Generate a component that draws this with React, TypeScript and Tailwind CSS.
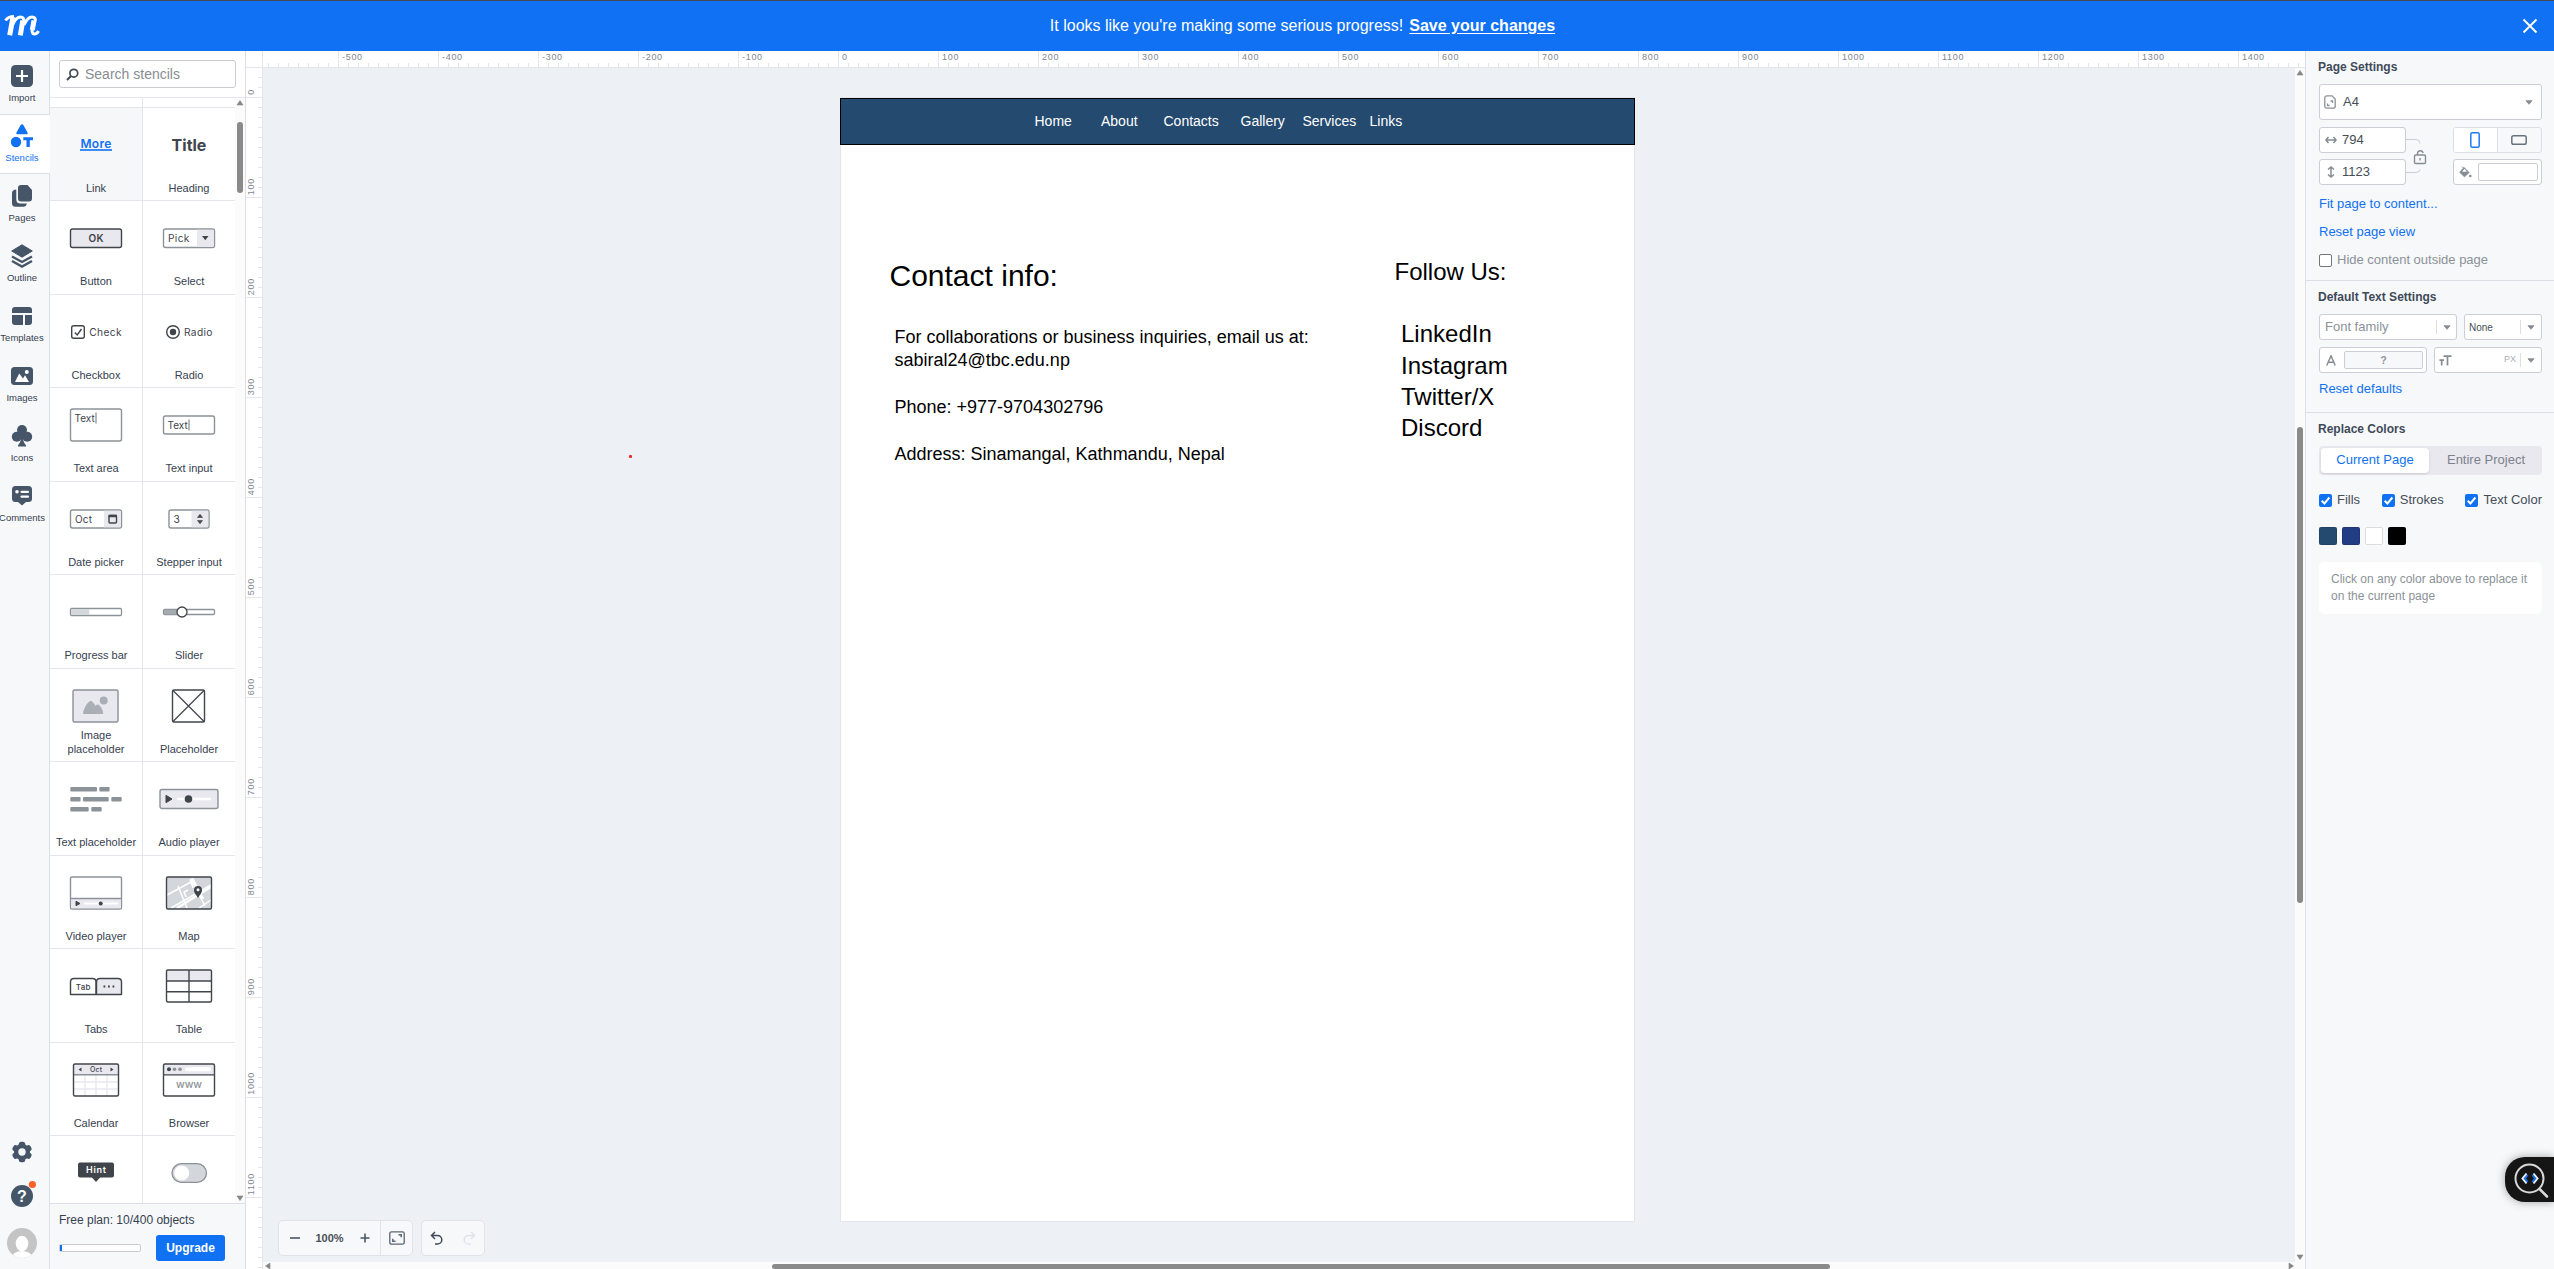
import React from "react";

const DARK = "#40444b";
const GRAY = "#8b9298";
const LIGHT = "#e9e8ef";
const SLATE = "#465668";

/* ---------- left rail ---------- */

const railIcons: Record<string, React.ReactNode> = {
  Import: (
    <>
      <rect x="1" y="1" width="22" height="22" rx="4.5" fill={SLATE} />
      <path d="M12 6v12M6 12h12" stroke="#fff" strokeWidth="2.2" />
    </>
  ),
  Stencils: (
    <g fill="#1071f2">
      <path d="M12 0.3c.6 0 1 .3 1.3.8l4.2 7.3c.5 1-.1 1.9-1.100 1.900H7.600c-1.100 0-1.600-.9-1.100-1.900L10.700 1.100c.3-.5.7-.8 1.300-.8z" />
      <circle cx="6" cy="18" r="5.200" />
      <path d="M13.300 13.200h9.700v3.100h-3.200V23h-3.300v-6.700h-3.200z" />
    </g>
  ),
  Pages: (
    <g fill={SLATE}>
      <path d="M11 1h6.500L22 6v8.500a3 3 0 0 1-3 3h-8a3 3 0 0 1-3-3V4a3 3 0 0 1 3-3z" />
      <path d="M6.300 5.500v10a4 4 0 0 0 4 4h6.500c-.3 2-1.500 3.300-3.300 3.300H5.500A3.500 3.500 0 0 1 2 19.300V9c0-2 1.800-3.500 4.300-3.500z" />
    </g>
  ),
  Outline: (
    <g>
      <path d="M12 .8 22.300 7 12 13.200 1.700 7z" fill={SLATE} stroke={SLATE} strokeLinejoin="round" />
      <path d="M2 12.500l10 5.500 10-5.500M2 17l10 5.600L22 17" fill="none" stroke={SLATE} strokeWidth="2.300" />
    </g>
  ),
  Templates: (
    <g fill={SLATE}>
      <path d="M5 3h14a3 3 0 0 1 3 3v3H2V6a3 3 0 0 1 3-3z" />
      <path d="M2 11h11v10H5a3 3 0 0 1-3-3zM15 11h7v7a3 3 0 0 1-3 3h-4z" />
    </g>
  ),
  Images: (
    <>
      <rect x="1" y="3" width="22" height="18" rx="3.500" fill={SLATE} />
      <path d="M5 18l4.200-8.500 3.800 5 2-3.200L19 18z" fill="#fff" />
      <circle cx="16.800" cy="8" r="2" fill="#fff" />
    </>
  ),
  Icons: (
    <g fill={SLATE}>
      <circle cx="12" cy="6" r="5" />
      <circle cx="6.800" cy="12.700" r="5" />
      <circle cx="17.200" cy="12.700" r="5" />
      <path d="M10 9h4l-1 5c.2 3.500 1.200 5 3 7.200V22.500H8v-1.300c1.800-2.200 2.800-3.700 3-7.200z" />
    </g>
  ),
  Comments: (
    <>
      <path d="M5.500 2h13A3.500 3.500 0 0 1 22 5.500v9a3.500 3.500 0 0 1-3.500 3.500H16l-4 3.500L8 18H5.500A3.500 3.500 0 0 1 2 14.500v-9A3.500 3.500 0 0 1 5.500 2z" fill={SLATE} />
      <circle cx="7" cy="7.800" r="1.800" fill="#fff" />
      <path d="M11.500 7.800h6.500M11.500 12.700h6.500" stroke="#fff" strokeWidth="2.200" strokeLinecap="round" />
    </>
  ),
};

function Rail() {
  return (
    <div className="flex w-[50px] shrink-0 flex-col border-r border-[#dcdfe6] bg-[#f7f8fa] pt-[3px]">
      {Object.keys(railIcons).map((name) => (
        <div
          key={name}
          className={
            name === "Stencils"
              ? "relative z-10 h-[60px] w-[50px] border-y border-[#dcdfe6] bg-white pt-[9px] text-[#1071f2]"
              : "h-[60px] w-[50px] pt-[10px] text-[#36414f]"
          }
        >
          <div className="flex w-[44px] flex-col items-center">
            <svg width="24" height="24" viewBox="0 0 24 24">
              {railIcons[name]}
            </svg>
            <span className="mt-1 text-[9.500px] leading-[12px] whitespace-nowrap">{name}</span>
          </div>
        </div>
      ))}
      <div className="mt-auto flex w-[44px] flex-col items-center pb-[11px]">
        <svg width="24" height="24" viewBox="0 0 24 24">
          <g fill={SLATE}>
            <circle cx="12" cy="12" r="8" />
            {[0, 60, 120, 180, 240, 300].map((a) => (
              <rect key={a} x="8.800" y="1.800" width="6.400" height="7" rx="2.500" transform={`rotate(${a} 12 12)`} />
            ))}
          </g>
          <circle cx="12" cy="12" r="3.700" fill="#f7f8fa" />
        </svg>
        <svg className="mt-[20px] overflow-visible" width="24" height="24" viewBox="0 0 24 24">
          <circle cx="12" cy="12" r="11" fill={SLATE} />
          <text x="12" y="17.500" textAnchor="middle" fontSize="16" fontWeight="700" fill="#fff">?</text>
          <circle cx="22.400" cy="0.500" r="3.600" fill="#fd6123" />
        </svg>
        <svg className="mt-[20px]" width="30" height="30" viewBox="0 0 30 30">
          <defs>
            <clipPath id="avatar"><circle cx="15" cy="15" r="15" /></clipPath>
          </defs>
          <g clipPath="url(#avatar)">
            <rect width="30" height="30" fill="#c4c4c4" />
            <ellipse cx="15" cy="15.500" rx="6.300" ry="7.800" fill="#fff" />
            <ellipse cx="15" cy="29" rx="10" ry="6" fill="#fff" />
          </g>
        </svg>
      </div>
    </div>
  );
}

/* ---------- stencil drawings, each on a 60x50 board ---------- */

const inter = "font-[Inter,sans-serif]";

const T = (p: { x: number; y: number; s?: number; w?: number; c?: string; ls?: number; a?: "start" | "middle"; children: string }) => (
  <text x={p.x} y={p.y} fontSize={p.s ?? 10.200} fontWeight={p.w ?? 400} fill={p.c ?? DARK} letterSpacing={p.ls ?? 0.350} textAnchor={p.a ?? "start"} className={inter}>
    {p.children}
  </text>
);

const stencils: [string, React.ReactNode][] = [
  ["Link", <><T x={30} y={28.200} s={12} w={600} c="#1071f2" ls={0.300} a="middle">More</T><path d="M14 30h32" stroke="#1071f2" strokeWidth="1.600" /></>],
  ["Heading", <T x={30} y={31} s={16} w={700} ls={0} a="middle">Title</T>],
  ["Button", <><rect x="4.500" y="16" width="51" height="18.500" rx="2" fill={LIGHT} stroke={DARK} strokeWidth="1.400" /><T x={30.200} y={28.700} s={10} w={600} a="middle">OK</T></>],
  ["Select", <><rect x="4.500" y="16" width="51" height="18.500" rx="2" fill="#fff" stroke={GRAY} strokeWidth="1.400" /><path d="M38 16.700h15.500a1.500 1.500 0 0 1 1.500 1.500v14a1.500 1.500 0 0 1-1.500 1.500H38z" fill={LIGHT} /><T x={9} y={28.700}>Pick</T><path d="M43 23h6.500l-3.200 4.200z" fill={DARK} /></>],
  ["Checkbox", <><rect x="5.700" y="18.700" width="12.600" height="12.600" rx="2" fill="none" stroke={DARK} strokeWidth="1.400" /><path d="M8.800 25.500l2.400 2.500 4.300-6" fill="none" stroke={DARK} strokeWidth="1.400" /><T x={23.300} y={28.700}>Check</T></>],
  ["Radio", <><circle cx="14" cy="25" r="6.300" fill="none" stroke={DARK} strokeWidth="1.400" /><circle cx="14" cy="25" r="3.200" fill={DARK} /><T x={25} y={28.700}>Radio</T></>],
  ["Text area", <><rect x="4.500" y="9" width="51" height="32" rx="2" fill="none" stroke={GRAY} strokeWidth="1.400" /><T x={8.500} y={21.700} s={10} ls={0}>Text</T><path d="M30 12.500v11" stroke={GRAY} strokeWidth="1.300" /></>],
  ["Text input", <><rect x="4.500" y="16" width="51" height="18" rx="2" fill="none" stroke={GRAY} strokeWidth="1.400" /><T x={8.500} y={28.700} s={10} ls={0}>Text</T><path d="M30 19.500v11" stroke={GRAY} strokeWidth="1.300" /></>],
  ["Date picker", <><rect x="4.500" y="16" width="51" height="18" rx="2" fill="#fff" stroke={GRAY} strokeWidth="1.400" /><path d="M38 16.700h16.700v16.600H38z" fill={LIGHT} /><T x={9} y={28.700} s={10} ls={0.200}>Oct</T><rect x="43" y="21.500" width="7.500" height="7.500" rx="1" fill="none" stroke={DARK} strokeWidth="1.400" /><path d="M42.500 22h8.500" stroke={DARK} strokeWidth="2.500" /></>],
  ["Stepper input", <><rect x="10" y="16" width="40" height="18" rx="2" fill="#fff" stroke={GRAY} strokeWidth="1.400" /><path d="M32.500 16.700h16.800v16.600H32.500z" fill={LIGHT} /><T x={14.500} y={28.700}>3</T><path d="M38.500 23.500h5l-2.500-3.300zM38.500 26.500h5L41 29.800z" fill={DARK} stroke={DARK} strokeWidth=".6" strokeLinejoin="round" /></>],
  ["Progress bar", <><rect x="4.500" y="21.500" width="51" height="7" rx="1.200" fill="#fff" stroke={GRAY} strokeWidth="1.300" /><rect x="5.200" y="22.200" width="18" height="5.600" fill="#d3d6da" /></>],
  ["Slider", <><rect x="4.500" y="22.500" width="51" height="5" rx="1.200" fill="#fff" stroke={GRAY} strokeWidth="1.300" /><rect x="5" y="22.800" width="15" height="4.500" fill="#a6abb0" /><circle cx="23" cy="25" r="5" fill="#fff" stroke={DARK} strokeWidth="1.300" /></>],
  ["Image placeholder", <><rect x="7" y="9" width="45" height="32" rx="1.500" fill={LIGHT} stroke={GRAY} strokeWidth="1.400" /><path d="M17.500 32.500c0-2 3.500-12 7.500-12 2.300 0 3.300 4.500 4.300 4.500s1-1 2.500-1c2.500 0 5 6.500 5 8.500z" fill="#a9afb5" stroke="#a9afb5" strokeLinejoin="round" /><circle cx="37.700" cy="19.600" r="4" fill="#a9afb5" /></>],
  ["Placeholder", <><rect x="13.500" y="9" width="32" height="32" rx="1.500" fill="none" stroke={DARK} strokeWidth="1.400" /><path d="M14 9.500l31 31M45 9.500l-31 31" stroke={DARK} strokeWidth="1.200" /></>],
  ["Text placeholder", (
    <g fill={GRAY}>
      {[[4.300, 13, 26.700], [33.300, 13, 10.300], [4.300, 23, 10.300], [17, 23, 25.700], [45.300, 23, 10.400], [4.300, 33, 18.400], [25.300, 33, 10.400]].map(([x, y, w]) => (
        <rect key={`${x}-${y}`} x={x} y={y} width={w} height="4.400" rx="1" />
      ))}
    </g>
  )],
  ["Audio player", <><rect x="1" y="15.500" width="58" height="19" rx="2" fill={LIGHT} stroke={GRAY} strokeWidth="1.400" /><path d="M7 21.300v7.400l6-3.700z" fill={DARK} stroke={DARK} /><path d="M19 25h32" stroke="#fff" strokeWidth="2.400" strokeLinecap="round" /><circle cx="29.500" cy="25" r="3.800" fill={DARK} /></>],
  ["Video player", <><rect x="4.500" y="9" width="51" height="32" rx="1.500" fill="#fff" stroke={GRAY} strokeWidth="1.400" /><rect x="5.200" y="30.500" width="49.600" height="9.800" fill={LIGHT} /><path d="M4.500 30.500h51" stroke={GRAY} strokeWidth="1.300" /><path d="M10 33.300v4.400l4-2.200z" fill={DARK} stroke={DARK} /><path d="M19 35.600h32" stroke="#fff" strokeWidth="2" strokeLinecap="round" /><circle cx="34.700" cy="35.600" r="2" fill={DARK} /></>],
  ["Map", <><rect x="7.500" y="9" width="45" height="32" rx="1.500" fill="#d3d6da" /><path d="M8 27l26-14M19 18l9 22M29 22l-4 2 2 5M12 40l40-23M32 12l14 26M40 40l12-8M34 20l-3-9" stroke="#fff" strokeWidth="1.500" fill="none" /><path d="M18 40l34-21M33 10l11 21" stroke="#fff" strokeWidth="2.600" /><rect x="7.500" y="9" width="45" height="32" rx="1.500" fill="none" stroke={DARK} strokeWidth="1.400" /><path d="M39 30c-1.500-3-4-4.500-4-8a4 4 0 0 1 8 0c0 3.500-2.500 5-4 8z" fill={DARK} /><circle cx="39" cy="21.800" r="1.500" fill="#fff" /></>],
  ["Tabs", <><path d="M4.500 33.500V21q0-3.500 3.500-3.500h18.500q3.500 0 3.500 3.500v12.500z" fill="#fff" stroke={DARK} strokeWidth="1.400" strokeLinejoin="round" /><path d="M30.500 33.500V21q0-3.500 3.500-3.500h18q3.500 0 3.500 3.500v12.500z" fill={LIGHT} stroke={DARK} strokeWidth="1.400" strokeLinejoin="round" /><T x={9.700} y={28.800} s={8} w={500}>Tab</T><path d="M37.500 25.500h1.800M42 25.500h1.800M46.500 25.500h1.800" stroke={DARK} strokeWidth="1.800" /></>],
  ["Table", <><rect x="7.500" y="9" width="45" height="32" rx="1.500" fill="#fff" /><rect x="8" y="9.500" width="44" height="10" fill={LIGHT} /><rect x="7.500" y="9" width="45" height="32" rx="1.500" fill="none" stroke={DARK} strokeWidth="1.400" /><path d="M7.500 20h45M7.500 30.700h45M30 9v32" stroke={DARK} strokeWidth="1.400" /></>],
  ["Calendar", <><rect x="7.500" y="9" width="45" height="32" rx="1.500" fill="#fff" /><rect x="8" y="9.500" width="44" height="10" fill={LIGHT} /><path d="M19 20v21M30 20v21M41 20v21M8 27h44M8 34h44" stroke={LIGHT} strokeWidth="1.400" /><path d="M7.500 19.800h45" stroke={GRAY} strokeWidth="1.400" /><rect x="7.500" y="9" width="45" height="32" rx="1.500" fill="none" stroke={DARK} strokeWidth="1.400" /><T x={30.200} y={17.200} s={7} w={500} ls={0.200} a="middle">Oct</T><path d="M15.500 12.500v4l-3-2zM44.500 12.500v4l3-2z" fill={DARK} /></>],
  ["Browser", <><rect x="4.500" y="9" width="51" height="32" rx="1.500" fill="#fff" /><rect x="5" y="9.500" width="50" height="10" fill={LIGHT} /><path d="M4.500 19.800h51" stroke={DARK} strokeWidth="1.300" /><rect x="4.500" y="9" width="51" height="32" rx="1.500" fill="none" stroke={DARK} strokeWidth="1.400" /><circle cx="10" cy="14.200" r="2" fill={DARK} /><circle cx="15.500" cy="14.200" r="1.800" fill={GRAY} /><circle cx="21" cy="14.200" r="1.800" fill={GRAY} /><rect x="26" y="12.200" width="26" height="4" rx="1.500" fill="#fff" /><T x={30} y={33.200} s={10.500} w={500} c={GRAY} ls={0} a="middle">www</T></>],
  ["Hint", <><rect x="12" y="14.500" width="36" height="15" rx="2" fill={DARK} /><path d="M25.500 29h9L30 34z" fill={DARK} /><T x={30.300} y={25.400} s={9} w={600} c="#fff" ls={0.700} a="middle">Hint</T></>],
  ["Toggle", <><rect x="13" y="15.700" width="34.500" height="18.600" rx="9.300" fill="#d3d6da" stroke={GRAY} strokeWidth="1.300" /><circle cx="22.700" cy="25" r="7.500" fill="#fff" /></>],
];

function StencilCell({ index }: { index: number }) {
  const [name, art] = stencils[index];
  const odd = index % 2 === 1;
  const last = index >= 22;
  return (
    <div
      className={
        "flex flex-col items-center border-[#e5e6ec] pt-[12px] " +
        (odd ? "w-[92px] " : "w-[93px] border-r ") +
        (last ? "" : "border-b ") +
        (name === "Link" ? "bg-[#f6f7f9]" : "bg-white")
      }
    >
      <svg className="shrink-0" width="60" height="50" viewBox="0 0 60 50">{art}</svg>
      {!last && (
        <div className="-mt-[10px] flex h-[35px] w-full shrink-0 items-end justify-center text-center text-[11px] leading-[14px] text-[#36414f]">
          <span className={name === "Image placeholder" ? "w-[64px]" : "whitespace-nowrap"}>{name}</span>
        </div>
      )}
    </div>
  );
}

const Arrow = ({ dir }: { dir: "up" | "down" | "left" | "right" }) => {
  const d = {
    up: "M4 1.500 7 6H1z",
    down: "M1 2h6L4 6.500z",
    left: "M1.500 4 6 1v6z",
    right: "M6.500 4 2 1v6z",
  }[dir];
  return (
    <svg width="8" height="8" viewBox="0 0 8 8" className="shrink-0">
      <path d={d} fill="#868686" stroke="#868686" strokeWidth=".6" strokeLinejoin="round" />
    </svg>
  );
};

function StencilPanel() {
  return (
    <div className="flex w-[196px] shrink-0 flex-col border-r border-[#dcdfe6] bg-white">
      <div className="h-[47px] border-b border-[#e5e6ec] px-[9px] pt-[9px]">
        <div className="flex h-[28px] w-[177px] items-center rounded-[3px] border border-[#c9ccd1] pl-[6px]">
          <svg width="13" height="13" viewBox="0 0 13 13">
            <circle cx="7.800" cy="5.200" r="3.900" fill="none" stroke="#414b57" strokeWidth="1.700" />
            <path d="M5 8 1 12" stroke="#414b57" strokeWidth="1.900" />
          </svg>
          <span className="ml-[6px] text-[14px] text-[#868d93]">Search stencils</span>
        </div>
      </div>
      <div className="flex h-[1105px]">
        <div className="w-[185px] overflow-hidden">
          <div className="flex h-[10px] border-b border-[#e5e6ec]">
            <div className="w-[93px] border-r border-[#e5e6ec]" />
          </div>
          {Array.from({ length: 12 }, (_, r) => (
            <div key={r} className={r === 11 ? "flex h-[67px]" : r % 2 === 0 ? "flex h-[93px]" : "flex h-[94px]"}>
              <StencilCell index={2 * r} />
              <StencilCell index={2 * r + 1} />
            </div>
          ))}
        </div>
        <div className="flex w-[10px] flex-col items-center bg-[#fbfbfb] pt-[1px]">
          <Arrow dir="up" />
          <div className="mt-[15px] h-[71px] w-[6px] rounded-full bg-[#8a8a8a]" />
          <div className="mt-auto h-[8px] pb-[9px]"><Arrow dir="down" /></div>
        </div>
      </div>
      <div className="flex-1 border-t border-[#dcdfe6] bg-[#f7f8fa] px-[9px] pt-[9px]">
        <div className="text-[12px] leading-[14px] text-[#36414f]">Free plan: 10/400 objects</div>
        <div className="mt-[8px] flex items-center">
          <div className="h-[8px] w-[82px] rounded-[2px] border border-[#c9ccd1] bg-white">
            <div className="h-full w-[2px] bg-[#1071f2]" />
          </div>
          <div className="ml-[15px] flex h-[26px] w-[69px] items-center justify-center rounded-[3px] bg-[#1071f2] text-[12px] font-bold text-white">
            Upgrade
          </div>
        </div>
      </div>
    </div>
  );
}

/* ---------- rulers ---------- */

function HorizontalRuler() {
  return (
    <div className="flex h-[17px] overflow-hidden border-b border-[#e5e6ec] bg-white">
      <div className="-ml-[25px] flex">
        {Array.from({ length: 21 }, (_, i) => (i - 6) * 100).map((v) => (
          <div key={v} className="flex h-[16px] w-[100px] shrink-0 flex-col justify-between border-l border-[#e5e6ec]">
            <span className="pt-[1px] pl-[3px] text-[9px] leading-[10px] tracking-[0.7px] text-[#7e868f]">{v === -600 ? "\u00a0" : v}</span>
            <div className="h-[4px] bg-[repeating-linear-gradient(to_right,transparent_0_9px,#e5e6ec_9px_10px)]" />
          </div>
        ))}
      </div>
    </div>
  );
}

function VerticalRuler() {
  return (
    <div className="flex w-[17px] shrink-0 flex-col border-r border-[#e5e6ec] bg-white">
      <div className="h-[17px] shrink-0 border-b border-[#e5e6ec]" />
      <div className="min-h-0 flex-1 overflow-hidden">
        <div className="-mt-[71px]">
          {Array.from({ length: 13 }, (_, i) => i * 100).map((v) => (
            <div key={v} className="flex h-[100px] items-end justify-between border-t border-[#e5e6ec]">
              <span className="rotate-180 pt-[2px] pl-[1px] text-[9px] leading-[10px] tracking-[0.7px] text-[#7e868f] [writing-mode:vertical-rl]">{v === 1200 ? "" : v}</span>
              <div className="h-full w-[4px] bg-[repeating-linear-gradient(to_bottom,transparent_0_9px,#e5e6ec_9px_10px)]" />
            </div>
          ))}
        </div>
      </div>
    </div>
  );
}

/* ---------- canvas ---------- */

function Workspace() {
  return (
    <div className="flex min-w-0 flex-1 flex-col">
      <HorizontalRuler />
      <div className="flex min-h-0 flex-1">
        <div className="relative flex-1 overflow-hidden bg-[#edf0f5]">
          <div className="absolute top-[387px] left-[366px] size-[3px] rounded-[1px] bg-[#e8292f]" />
          <div className="absolute top-[29px] left-[577px] h-[1125px] w-[795px] border border-[#e2e5ea] bg-white text-black">
            <div className="absolute top-0 -left-px h-[47px] w-[795px] border border-black bg-[#244a6f] text-[14px] leading-[16px] whitespace-nowrap text-white">
              <span className="absolute top-[14px] left-[193.500px]">Home</span>
              <span className="absolute top-[14px] left-[260px]">About</span>
              <span className="absolute top-[14px] left-[322.500px]">Contacts</span>
              <span className="absolute top-[14px] left-[399.500px]">Gallery</span>
              <span className="absolute top-[14px] left-[461.500px]">Services</span>
              <span className="absolute top-[14px] left-[528.500px]">Links</span>
            </div>
            <div className="absolute top-[158px] left-[48.500px] text-[30px] leading-[39px] whitespace-nowrap">Contact info:</div>
            <div className="absolute top-[228px] left-[53.500px] text-[18px] leading-[23.400px] whitespace-pre">
              {"For collaborations or business inquiries, email us at:\nsabiral24@tbc.edu.np\n\nPhone: +977-9704302796\n\nAddress: Sinamangal, Kathmandu, Nepal"}
            </div>
            <div className="absolute top-[158px] left-[553.500px] text-[24px] leading-[31.200px] whitespace-nowrap">Follow Us:</div>
            <div className="absolute top-[220.300px] left-[560px] text-[24px] leading-[31.200px] whitespace-pre">
              {"LinkedIn\nInstagram\nTwitter/X\nDiscord"}
            </div>
          </div>
          <div className="absolute bottom-[6px] left-[15px] flex gap-[8px]">
            <div className="flex h-[36px] w-[135px] items-center rounded-[5px] border border-[#dfe2e8] bg-[#f7f8fa]">
              <svg className="ml-[10px]" width="12" height="12" viewBox="0 0 12 12"><path d="M1 6h10" stroke="#4a5663" strokeWidth="1.600" /></svg>
              <span className="w-[58px] pr-[1px] text-center text-[11px] font-bold text-[#4a4f57]">100%</span>
              <svg width="12" height="12" viewBox="0 0 12 12"><path d="M1.500 6h9M6 1.500v9" stroke="#4a5663" strokeWidth="1.600" /></svg>
              <div className="ml-auto flex h-full w-[32px] items-center justify-center border-l border-[#dfe2e8]">
                <svg width="16" height="14" viewBox="0 0 16 14" fill="none" stroke="#5a6673" strokeWidth="1.300">
                  <rect x=".8" y=".8" width="14.400" height="12.400" rx="1.800" />
                  <path d="M9.500 3.800h2.700v2.500M6.500 10.200H3.800V7.700" strokeWidth="1.500" />
                </svg>
              </div>
            </div>
            <div className="flex h-[36px] w-[64px] items-center justify-between rounded-[5px] border border-[#dfe2e8] bg-[#f7f8fa] px-[8px]">
              <svg width="14" height="14" viewBox="0 0 14 14" fill="none" stroke="#3f4a57" strokeWidth="1.500">
                <path d="M1.500 4.500h6a4.300 4.300 0 0 1 0 8.600H5M5 1 1.500 4.500 5 8" />
              </svg>
              <svg width="14" height="14" viewBox="0 0 14 14" fill="none" stroke="#dfe2e6" strokeWidth="1.400">
                <path d="M12.500 4.500h-6a4.300 4.300 0 0 0 0 8.600H9M9 1l3.500 3.500L9 8" />
              </svg>
            </div>
          </div>
        </div>
        <div className="flex w-[10px] flex-col items-center bg-[#fbfbfb] pt-[1px]">
          <Arrow dir="up" />
          <div className="mt-[350px] h-[476px] w-[6px] rounded-full bg-[#8a8a8a]" />
          <div className="mt-auto pb-[1px]"><Arrow dir="down" /></div>
        </div>
      </div>
      <div className="flex h-[7px] items-start bg-[#fbfbfb] pr-[10px] pl-[1px]">
        <Arrow dir="left" />
        <div className="mt-[2px] ml-[500px] h-[5px] w-[1058px] rounded-full bg-[#8a8a8a]" />
        <div className="ml-auto"><Arrow dir="right" /></div>
      </div>
    </div>
  );
}

/* ---------- settings panel ---------- */

const Caret = () => (
  <svg width="8" height="5" viewBox="0 0 8 5" className="shrink-0"><path d="M1 .7h6L4 4.300z" fill="#858c93" stroke="#858c93" strokeWidth=".8" strokeLinejoin="round" /></svg>
);

const box = "flex items-center rounded-[3px] border border-[#cbced4] bg-white ";

const Check = ({ label }: { label: string }) => (
  <div className="flex items-center">
    <svg width="13" height="13" viewBox="0 0 13 13" className="mt-[1px]">
      <rect width="13" height="13" rx="2" fill="#1071f2" />
      <path d="M2.700 6.800l2.700 2.700 5-6" fill="none" stroke="#fff" strokeWidth="2" />
    </svg>
    <span className="ml-[5px]">{label}</span>
  </div>
);

function Settings() {
  return (
    <div className="w-[249px] shrink-0 border-l border-[#dcdfe6] bg-[#f7f8fa] text-[13px] text-[#454d57]">
      <section className="h-[230px] border-b border-[#dcdfe6] pr-[12px] pl-[13px]">
        <h2 className="-ml-px pt-[8px] text-[12px] leading-[16px] font-bold text-[#3f4a59]">Page Settings</h2>
        <div className={box + "mt-[9px] h-[36px] pr-[8px] pl-[4px]"}>
          <svg width="12" height="14" viewBox="0 0 12 14" fill="none" stroke="#8b9298" strokeWidth="1.300">
            <path d="M3 .8h5L11.200 4v7.200a2 2 0 0 1-2 2H2.800a2 2 0 0 1-2-2V2.800a2 2 0 0 1 2-2z" />
            <path d="M6.500 6h2v2M5.500 10.500h-2v-2" />
          </svg>
          <span className="ml-[7px] flex-1">A4</span>
          <Caret />
        </div>
        <div className="mt-[7px] flex">
          <div className="flex w-[87px] flex-col gap-[6px]">
            <div className={box + "h-[26px] pl-[5px]"}>
              <svg width="12" height="8" viewBox="0 0 12 8" fill="none" stroke="#858c93" strokeWidth="1.500"><path d="M1 4h10M3.500 1 1 4l2.500 3M8.500 1 11 4 8.500 7" /></svg>
              <span className="ml-[5px]">794</span>
            </div>
            <div className={box + "h-[26px] pl-[7px]"}>
              <svg width="8" height="12" viewBox="0 0 8 12" fill="none" stroke="#858c93" strokeWidth="1.500"><path d="M4 1v10M1 3.500 4 1l3 2.500M1 8.500 4 11l3-2.500" /></svg>
              <span className="ml-[7px]">1123</span>
            </div>
          </div>
          <svg width="24" height="58" viewBox="0 0 24 58" fill="none">
            <path d="M0 12.500h10q4 0 4 4M0 45.500h10q4 0 4-3" stroke="#cbced4" />
            <rect x="8.500" y="28" width="11" height="8.500" rx="1.300" stroke="#858c93" strokeWidth="1.400" />
            <path d="M11.500 28v-1.500q0-2.800 2.800-2.800 2.500 0 2.700 2.300M14 31v2.500" stroke="#858c93" strokeWidth="1.400" />
          </svg>
          <div className="ml-auto flex w-[89px] flex-col gap-[6px]">
            <div className="flex h-[26px] overflow-hidden rounded-[3px] border border-[#dcdfe4]">
              <div className="flex w-[44px] items-center justify-center border-r border-[#dcdfe4] bg-white pr-px">
                <svg width="10" height="16" viewBox="0 0 10 16"><rect x=".8" y=".8" width="8.400" height="14.400" rx="1.500" fill="none" stroke="#1f7af5" strokeWidth="1.500" /></svg>
              </div>
              <div className="flex flex-1 items-center justify-center pr-px">
                <svg width="16" height="10" viewBox="0 0 16 10"><rect x=".8" y=".8" width="14.400" height="8.400" rx="1.800" fill="none" stroke="#68737f" strokeWidth="1.500" /></svg>
              </div>
            </div>
            <div className={box + "h-[26px] pr-[3px] pl-[5px]"}>
              <svg width="13" height="12" viewBox="0 0 13 12">
                <path d="M5 1.500 10 6.500 5.500 10.800.8 6.300z" fill="#858c93" stroke="#858c93" strokeLinejoin="round" />
                <path d="M5.500 2.800 8 5.800H3z" fill="#fff" />
                <path d="M3 .5 5 2.500" stroke="#858c93" />
                <circle cx="11.300" cy="10" r="1.300" fill="#858c93" />
              </svg>
              <div className="ml-auto h-[18px] w-[60px] rounded-[2px] border border-[#cbced4]" />
            </div>
          </div>
        </div>
        <div className="mt-[11px] text-[#1071f2]">
          <div className="leading-[16px]">Fit page to content...</div>
          <div className="mt-[12px] leading-[16px]">Reset page view</div>
        </div>
        <div className="mt-[12px] flex items-center leading-[16px] text-[#8b9298]">
          <div className="size-[13px] rounded-[2px] border border-[#767676] bg-white" />
          <span className="ml-[5px]">Hide content outside page</span>
        </div>
      </section>

      <section className="h-[132px] border-b border-[#dcdfe6] pr-[12px] pl-[13px]">
        <h2 className="-ml-px pt-[8px] text-[12px] leading-[16px] font-bold text-[#3f4a59]">Default Text Settings</h2>
        <div className="mt-[9px] flex justify-between">
          <div className={box + "h-[26px] w-[138px] pr-[5px] pl-[5px]"}>
            <span className="text-[#8b9298]">Font family</span>
            <div className="mr-[6px] ml-auto h-[14px] w-px bg-[#dcdfe4]" />
            <Caret />
          </div>
          <div className={box + "h-[26px] w-[78px] pr-[6px] pl-[4px]"}>
            <span className="text-[10px]">None</span>
            <div className="mr-[6px] ml-auto h-[14px] w-px bg-[#dcdfe4]" />
            <Caret />
          </div>
        </div>
        <div className="mt-[7px] flex justify-between">
          <div className={box + "h-[26px] w-[108px] pr-[3px] pl-[6px]"}>
            <svg width="10" height="11" viewBox="0 0 10 11" fill="none" stroke="#858c93" strokeWidth="1.500"><path d="M.8 10.500 5 .8l4.200 9.700M2.300 7.300h5.400" /></svg>
            <div className="ml-auto flex h-[18px] w-[79px] items-center justify-center rounded-[2px] border border-[#cbced4] bg-[#f7f8fa] text-[10px] font-bold text-[#8b9298]">?</div>
          </div>
          <div className={box + "h-[26px] w-[108px] pr-[6px] pl-[4px]"}>
            <svg width="13" height="11" viewBox="0 0 13 11" fill="none" stroke="#858c93" strokeWidth="1.700"><path d="M4.500 1.200h8M8.500 1v9.500M.5 5.200h4.500M2.700 5v5.500" /></svg>
            <span className="ml-auto text-[9px] text-[#a9aeb4]">PX</span>
            <div className="mr-[6px] ml-[4px] h-[14px] w-px bg-[#dcdfe4]" />
            <Caret />
          </div>
        </div>
        <div className="mt-[8px] leading-[16px] text-[#1071f2]">Reset defaults</div>
      </section>

      <section className="pr-[12px] pl-[13px]">
        <h2 className="-ml-px pt-[8px] text-[12px] leading-[16px] font-bold text-[#3f4a59]">Replace Colors</h2>
        <div className="mt-[9px] flex h-[29px] rounded-[4px] bg-[#e9e8ee] p-[2px] leading-[24px]">
          <div className="w-[108px] rounded-[4px] bg-white text-center text-[#1071f2] shadow-sm">Current Page</div>
          <div className="flex-1 pl-[3px] text-center text-[#7b838c]">Entire Project</div>
        </div>
        <div className="mt-[17px] flex justify-between leading-[16px]">
          <Check label="Fills" />
          <Check label="Strokes" />
          <Check label="Text Color" />
        </div>
        <div className="mt-[19px] flex gap-[5px]">
          <div className="size-[18px] rounded-[2px] border border-black/10 bg-[#244a6f]" />
          <div className="size-[18px] rounded-[2px] border border-black/10 bg-[#233d85]" />
          <div className="size-[18px] rounded-[2px] border border-[#dcdcdf] bg-white" />
          <div className="size-[18px] rounded-[2px] bg-black" />
        </div>
        <div className="mt-[17px] h-[52px] rounded-[5px] bg-white px-[12px] pt-[9px] text-[12px] leading-[17px] whitespace-nowrap text-[#8b9298]">
          Click on any color above to replace it
          <br />
          on the current page
        </div>
      </section>
    </div>
  );
}

export default function App() {
  return (
    <div className="relative flex h-[1269px] w-[2554px] flex-col overflow-hidden font-['Liberation_Sans',Arial,sans-serif]">
      <header className="flex h-[51px] shrink-0 items-center border-t border-[#474a50] bg-[#1071f5] text-white">
        <svg width="50" height="50" viewBox="0 1 50 50" fill="none" stroke="#fff" aria-label="m">
          <path d="M13 17 9.700 35.300M22.800 20.500 20.300 35.300M34 20.500 32.300 30" strokeWidth="5" />
          <path d="M5.500 20.500Q8 16.500 14 16.500M12.500 25Q16 17 20.500 17Q24 17 23.700 21M24 25Q27.500 17 32 17Q35.800 17 35.300 21M32.300 28.500Q31.300 34 34.500 34Q37 34 38.500 31" strokeWidth="3" />
        </svg>
        <div className="flex flex-1 justify-center pl-[33px] text-[16px] leading-[20px]">
          <span>It looks like you're making some serious progress!</span>
          <span className="ml-[6px] font-bold underline underline-offset-2">Save your changes</span>
        </div>
        <svg className="mr-[16px]" width="16" height="16" viewBox="0 0 16 16"><path d="M1.500 1.500l13 13M14.500 1.500l-13 13" stroke="#fff" strokeWidth="1.900" /></svg>
      </header>
      <div className="flex min-h-0 flex-1">
        <Rail />
        <StencilPanel />
        <VerticalRuler />
        <Workspace />
        <Settings />
      </div>
      <div className="absolute top-[1157px] right-0 flex h-[45px] w-[49px] items-center rounded-l-[20px] bg-[#151515] pl-[9px] shadow-[0_0_10px_rgba(0,0,0,0.35)]">
        <svg width="36" height="36" viewBox="0 0 36 36" fill="none">
          <circle cx="15.500" cy="16.500" r="14" stroke="#d9d9d9" strokeWidth="2" />
          <path d="M25.500 27l7.500 7.500" stroke="#d9d9d9" strokeWidth="2.500" strokeLinecap="round" />
          <path d="M13.500 13l-2.500 3.500 2.500 3.500M18.500 13l2.500 3.500-2.500 3.500" stroke="#1071f2" strokeWidth="2" />
          <path d="M12.500 11.500l-4 5 4 5M19.500 11.500l4 5-4 5" stroke="#e4ecf7" strokeWidth="2" />
        </svg>
      </div>
    </div>
  );
}
